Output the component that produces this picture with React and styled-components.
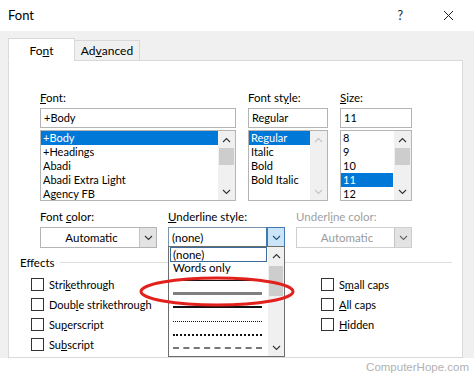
import React from 'react'
import styled, { createGlobalStyle } from 'styled-components'

const GlobalStyle = createGlobalStyle`
  html, body {
    margin: 0;
    padding: 0;
    background: #fff;
  }
  body {
    font-family: Lato, 'Noto Sans', 'Segoe UI', sans-serif;
    font-size: 11px;
    color: #000;
  }
`

const Chevron = ({ up, color = '#333' }) => (
  <svg width='9' height='6' viewBox='0 0 9 6'>
    <polyline
      points={up ? '1,5 4.5,1.5 8,5' : '1,1 4.5,4.5 8,1'}
      fill='none'
      stroke={color}
      strokeWidth='1.1'
    />
  </svg>
)

const CloseIcon = () => (
  <svg width='11' height='11' viewBox='0 0 11 11'>
    <path d='M1 1 L10 10 M10 1 L1 10' stroke='#222' strokeWidth='1' />
  </svg>
)

const fontItems = ['+Body', '+Headings', 'Abadi', 'Abadi Extra Light', 'Agency FB']
const styleItems = ['Regular', 'Italic', 'Bold', 'Bold Italic']
const sizeItems = ['8', '9', '10', '11', '12']

const lineOptions = [
  { h: 13, line: '1px solid #111' },
  { h: 13, line: '3px solid #7f7f7f' },
  { h: 14, line: '2px solid #111' },
  { h: 14, line: '1px dotted #111' },
  { h: 13, line: '2px dotted #111' },
  { h: 14, line: '2px dashed #777' }
]

export default () => (
  <Dialog>
    <GlobalStyle />
    <TitleBar>
      <Title>Font</Title>
      <Help>?</Help>
      <Close>
        <CloseIcon />
      </Close>
    </TitleBar>

    <Body>
      <TabStrip>
        <Tab active width={67}>
          Fo<u>n</u>t
        </Tab>
        <Tab width={66}>
          Ad<u>v</u>anced
        </Tab>
      </TabStrip>

      <Panel>
        <FontGrid>
          <Field>
            <Label>
              <u>F</u>ont:
            </Label>
            <TextBox>+Body</TextBox>
            <List items={fontItems} selected={0} thumb />
          </Field>
          <Field>
            <Label>
              Font st<u>y</u>le:
            </Label>
            <TextBox>Regular</TextBox>
            <List items={styleItems} selected={0} disabled selWidth={61} />
          </Field>
          <Field>
            <Label>
              <u>S</u>ize:
            </Label>
            <TextBox>11</TextBox>
            <List items={sizeItems} selected={3} thumb selWidth={52} />
          </Field>
        </FontGrid>

        <ColorGrid>
          <Field>
            <Label>
              Font <u>c</u>olor:
            </Label>
            <Select>
              <SelectValue center>Automatic</SelectValue>
              <SelectButton>
                <Chevron />
              </SelectButton>
            </Select>
          </Field>
          <Field>
            <Label>
              <u>U</u>nderline style:
            </Label>
            <Select focused>
              <SelectValue>(none)</SelectValue>
              <SelectButton hot>
                <Chevron color='#1a4f80' />
              </SelectButton>
              <DropList>
                <Options>
                  <FocusOption>(none)</FocusOption>
                  <Option h={12}>Words only</Option>
                  {lineOptions.map((o, i) => (
                    <Option key={i} h={o.h}>
                      <UnderlineSample line={o.line} />
                    </Option>
                  ))}
                </Options>
                <ScrollBar width={16}>
                  <ScrollButton>
                    <Chevron up />
                  </ScrollButton>
                  <Gap size={2} />
                  <Thumb size={30} />
                  <Spacer />
                  <ScrollButton>
                    <Chevron />
                  </ScrollButton>
                </ScrollBar>
              </DropList>
            </Select>
          </Field>
          <Field>
            <Label disabled>
              Underl<u>i</u>ne color:
            </Label>
            <Select disabled>
              <SelectValue center disabled>
                Automatic
              </SelectValue>
              <SelectButton>
                <Chevron color='#666' />
              </SelectButton>
            </Select>
          </Field>
        </ColorGrid>

        <EffectsHeader>
          <span>Effects</span>
          <Rule />
        </EffectsHeader>
        <EffectsGrid>
          <Check>
            Stri<u>k</u>ethrough
          </Check>
          <Check>
            Doub<u>l</u>e strikethrough
          </Check>
          <Check>
            Su<u>p</u>erscript
          </Check>
          <Check>
            Su<u>b</u>script
          </Check>
          <Check>
            S<u>m</u>all caps
          </Check>
          <Check>
            <u>A</u>ll caps
          </Check>
          <Check>
            <u>H</u>idden
          </Check>
        </EffectsGrid>
      </Panel>
    </Body>

    <Footer>ComputerHope.com</Footer>

    <Annotation width='474' height='376' viewBox='0 0 474 376'>
      <ellipse
        cx='217'
        cy='291.5'
        rx='76'
        ry='13.5'
        fill='none'
        stroke='#e2211c'
        strokeWidth='3'
      />
    </Annotation>
  </Dialog>
)

const List = ({ items, selected, thumb, disabled, selWidth }) => (
  <ListBox>
    <Items>
      {items.map((item, i) => (
        <Item key={item} selected={i === selected} selWidth={selWidth}>
          {item}
        </Item>
      ))}
    </Items>
    <ScrollBar width={17}>
      <ScrollButton>
        <Chevron up color={disabled ? '#c4c4c4' : '#333'} />
      </ScrollButton>
      {thumb && <Thumb size={17} />}
      <Spacer />
      <ScrollButton>
        <Chevron color={disabled ? '#c4c4c4' : '#333'} />
      </ScrollButton>
    </ScrollBar>
  </ListBox>
)

const Check = ({ children }) => (
  <CheckRow>
    <Box />
    <span>{children}</span>
  </CheckRow>
)

const Dialog = styled.div`
  position: relative;
  width: 474px;
  height: 376px;
  overflow: hidden;
  background: #fff;
`
const TitleBar = styled.div`
  height: 31px;
  display: flex;
  align-items: center;
  padding-left: 8px;
  box-sizing: border-box;
`
const Title = styled.div`
  flex: 1;
  font-size: 13px;
  padding-bottom: 1px;
`
const Help = styled.span`
  font-size: 12.5px;
  color: #222;
  margin-right: 40px;
`
const Close = styled.span`
  display: flex;
  margin-right: 20px;
`
const Body = styled.div`
  background: #f0f0f0;
  padding: 7px 11px 0 8px;
`
const TabStrip = styled.div`
  position: relative;
  z-index: 1;
  display: flex;
  align-items: flex-end;
  height: 23px;
  margin-bottom: -1px;
`
const Tab = styled.div`
  box-sizing: border-box;
  width: ${p => p.width}px;
  height: ${p => (p.active ? 23 : 21)}px;
  margin-left: ${p => (p.active ? 0 : -1)}px;
  display: flex;
  align-items: center;
  justify-content: center;
  padding-top: ${p => (p.active ? 2 : 0)}px;
  border: 1px solid #d9d9d9;
  border-bottom-color: ${p => (p.active ? '#fff' : '#d9d9d9')};
  background: ${p => (p.active ? '#fff' : '#f0f0f0')};
  font-size: 12px;
`
const Panel = styled.div`
  box-sizing: border-box;
  height: 298px;
  padding: 30px 10px 0 11px;
  background: #fff;
  border: 1px solid #d9d9d9;
`
const FontGrid = styled.div`
  display: grid;
  grid-template-columns: 196px 80px 72px;
  column-gap: 12px;
  margin-left: 20px;
`
const ColorGrid = styled.div`
  display: grid;
  grid-template-columns: 117px 117px 116px;
  column-gap: 11px;
  margin: 9px 0 0 20px;
`
const Field = styled.div`
  display: flex;
  flex-direction: column;
`
const Label = styled.div`
  height: 14px;
  line-height: 14px;
  margin-bottom: 3px;
  white-space: nowrap;
  font-size: 11.5px;
  color: ${p => (p.disabled ? '#a0a0a0' : '#000')};
`
const TextBox = styled.div`
  box-sizing: border-box;
  height: 20px;
  line-height: 18px;
  padding: 0 3px;
  border: 1px solid #b4b4b4;
`
const ListBox = styled.div`
  box-sizing: border-box;
  display: flex;
  height: 71px;
  margin-top: 2px;
  border: 1px solid #b4b4b4;
`
const Items = styled.div`
  flex: 1;
  min-width: 0;
`
const Item = styled.div`
  height: 14px;
  line-height: 14px;
  padding-left: 2px;
  white-space: nowrap;
  width: ${p => (p.selWidth ? `${p.selWidth}px` : 'auto')};
  box-sizing: border-box;
  background: ${p => (p.selected ? '#0078d7' : 'transparent')};
  color: ${p => (p.selected ? '#fff' : '#000')};
`
const ScrollBar = styled.div`
  width: ${p => p.width}px;
  flex: none;
  display: flex;
  flex-direction: column;
  background: #f0f0f0;
`
const ScrollButton = styled.div`
  height: 17px;
  flex: none;
  display: flex;
  align-items: center;
  justify-content: center;
`
const Thumb = styled.div`
  height: ${p => p.size}px;
  flex: none;
  margin: 0 1px;
  background: #cdcdcd;
`
const Gap = styled.div`
  height: ${p => p.size}px;
  flex: none;
`
const Spacer = styled.div`
  flex: 1;
`
const Select = styled.div`
  position: relative;
  box-sizing: border-box;
  display: flex;
  height: 21px;
  border: 1px solid
    ${p => (p.focused ? '#7b93ad' : p.disabled ? '#cfcfcf' : '#b4b4b4')};
`
const SelectValue = styled.div`
  flex: 1;
  line-height: 19px;
  padding-left: 3px;
  font-size: 11.5px;
  text-align: ${p => (p.center ? 'center' : 'left')};
  color: ${p => (p.disabled ? '#9a9a9a' : '#000')};
`
const SelectButton = styled.div`
  width: 16px;
  display: flex;
  align-items: center;
  justify-content: center;
  background: ${p => (p.hot ? '#cce4f7' : '#e3e3e3')};
  border-left: 1px solid ${p => (p.hot ? '#3f79ad' : '#c4c4c4')};
  ${p => p.hot && 'outline: 1px solid #3f79ad;'}
`
const DropList = styled.div`
  position: absolute;
  z-index: 3;
  top: 18px;
  left: -1px;
  box-sizing: border-box;
  width: 117px;
  height: 111px;
  display: flex;
  background: #fff;
  border: 1px solid #6d6d6d;
`
const Options = styled.div`
  flex: 1;
  padding: 0 1px;
`
const Option = styled.div`
  height: ${p => p.h}px;
  line-height: ${p => p.h}px;
  display: flex;
  align-items: center;
  padding: 0 3px;
  white-space: nowrap;
  font-size: 11.5px;
`
const FocusOption = styled(Option)`
  height: 13px;
  line-height: 11px;
  padding: 0 2px;
  border: 1px solid #3d6c9a;
`
const UnderlineSample = styled.div`
  flex: 1;
  border-top: ${p => p.line};
  margin-right: 2px;
`
const EffectsHeader = styled.div`
  display: flex;
  align-items: center;
  height: 14px;
  margin-top: 7px;
  gap: 5px;
  font-size: 11.5px;
`
const Rule = styled.div`
  flex: 1;
  height: 1px;
  background: #dcdcdc;
`
const EffectsGrid = styled.div`
  display: grid;
  grid-template-columns: 290px auto;
  grid-template-rows: repeat(4, 20px);
  grid-auto-flow: column;
  margin: 5px 0 0 11px;
`
const CheckRow = styled.label`
  display: flex;
  align-items: center;
  gap: 5px;
  white-space: nowrap;
  font-size: 11px;
`
const Box = styled.span`
  box-sizing: border-box;
  width: 13px;
  height: 13px;
  border: 1px solid #333;
  background: #fff;
`
const Footer = styled.div`
  height: 18px;
  display: flex;
  align-items: center;
  justify-content: flex-end;
  padding-right: 5px;
  font-family: 'Liberation Sans', Arial, sans-serif;
  font-size: 11.5px;
  color: #b2b2b2;
`
const Annotation = styled.svg`
  position: absolute;
  top: 0;
  left: 0;
  pointer-events: none;
  z-index: 5;
`
